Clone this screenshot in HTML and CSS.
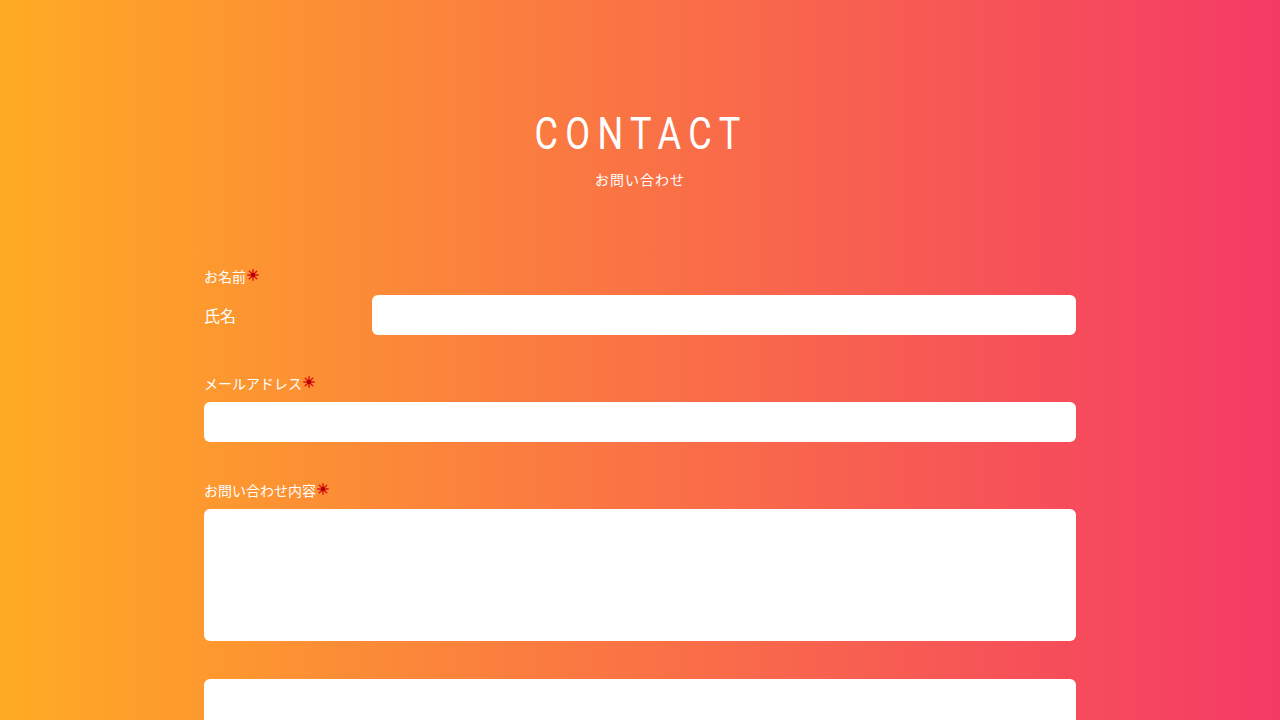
FILE: index.html
```html
<!DOCTYPE html>
<html lang="ja">
<head>
<meta charset="utf-8">
<title>CONTACT</title>
<link rel="stylesheet" href="styles.css">
</head>
<body>
<main class="page">
  <header class="head">
    <h1 class="title">CONTACT</h1>
    <p class="subtitle">お問い合わせ</p>
  </header>
  <form class="form">
    <div class="field">
      <div class="label">お名前<svg class="req" viewBox="0 0 12 12" width="12" height="12"><g stroke="#e01010" stroke-width="1.4" stroke-linecap="round"><line x1="6" y1="0.8" x2="6" y2="11.2"/><line x1="0.8" y1="6" x2="11.2" y2="6"/><line x1="2.3" y1="2.3" x2="9.7" y2="9.7"/><line x1="9.7" y1="2.3" x2="2.3" y2="9.7"/></g><circle cx="6" cy="6" r="2.2" fill="#b00000"/></svg></div>
      <div class="row">
        <span class="sublabel">氏名</span>
        <div class="input input-grow"></div>
      </div>
    </div>
    <div class="field">
      <div class="label">メールアドレス<svg class="req" viewBox="0 0 12 12" width="12" height="12"><g stroke="#e01010" stroke-width="1.4" stroke-linecap="round"><line x1="6" y1="0.8" x2="6" y2="11.2"/><line x1="0.8" y1="6" x2="11.2" y2="6"/><line x1="2.3" y1="2.3" x2="9.7" y2="9.7"/><line x1="9.7" y1="2.3" x2="2.3" y2="9.7"/></g><circle cx="6" cy="6" r="2.2" fill="#b00000"/></svg></div>
      <div class="input"></div>
    </div>
    <div class="field">
      <div class="label">お問い合わせ内容<svg class="req" viewBox="0 0 12 12" width="12" height="12"><g stroke="#e01010" stroke-width="1.4" stroke-linecap="round"><line x1="6" y1="0.8" x2="6" y2="11.2"/><line x1="0.8" y1="6" x2="11.2" y2="6"/><line x1="2.3" y1="2.3" x2="9.7" y2="9.7"/><line x1="9.7" y1="2.3" x2="2.3" y2="9.7"/></g><circle cx="6" cy="6" r="2.2" fill="#b00000"/></svg></div>
      <div class="textarea"></div>
    </div>
    <div class="field">
      <div class="extra"></div>
    </div>
  </form>
</main>
</body>
</html>
```
FILE: styles.css
```css
html, body {
  margin: 0;
  padding: 0;
}
body {
  background: linear-gradient(90deg, #ffab24 0%, #f43a66 100%);
  height: 100vh;
  overflow: hidden;
  color: #fff;
  font-family: "Noto Sans CJK JP", "Noto Sans", sans-serif;
}
.page {
  display: flex;
  flex-direction: column;
  align-items: center;
}
.head {
  padding-top: 107px;
  text-align: center;
}
.title {
  margin: 0;
  font-family: Roboto, "Liberation Sans", sans-serif;
  font-weight: 400;
  font-size: 44px;
  line-height: 54px;
  letter-spacing: 9px;
  margin-right: -9px;
  transform: translateX(-4px) scaleX(0.82);
}
.subtitle {
  margin: 8px 0 0;
  font-size: 14px;
  line-height: 20px;
  letter-spacing: 1px;
}
.form {
  width: 872px;
  margin-top: 77px;
  display: flex;
  flex-direction: column;
  gap: 38px;
}
.field {
  display: flex;
  flex-direction: column;
  gap: 9px;
}
.label {
  display: flex;
  align-items: center;
  font-size: 14px;
  line-height: 20px;
  height: 20px;
}
.req {
  margin-left: 1px;
  margin-top: -2px;
}
.row {
  display: flex;
  align-items: center;
}
.sublabel {
  width: 168px;
  flex: none;
  font-size: 16px;
  line-height: 24px;
}
.input {
  height: 40px;
  background: #fff;
  border-radius: 6px;
}
.input-grow {
  flex: 1;
}
.textarea {
  height: 132px;
  background: #fff;
  border-radius: 6px;
}
.extra {
  height: 80px;
  background: #fff;
  border-radius: 6px;
}
```
